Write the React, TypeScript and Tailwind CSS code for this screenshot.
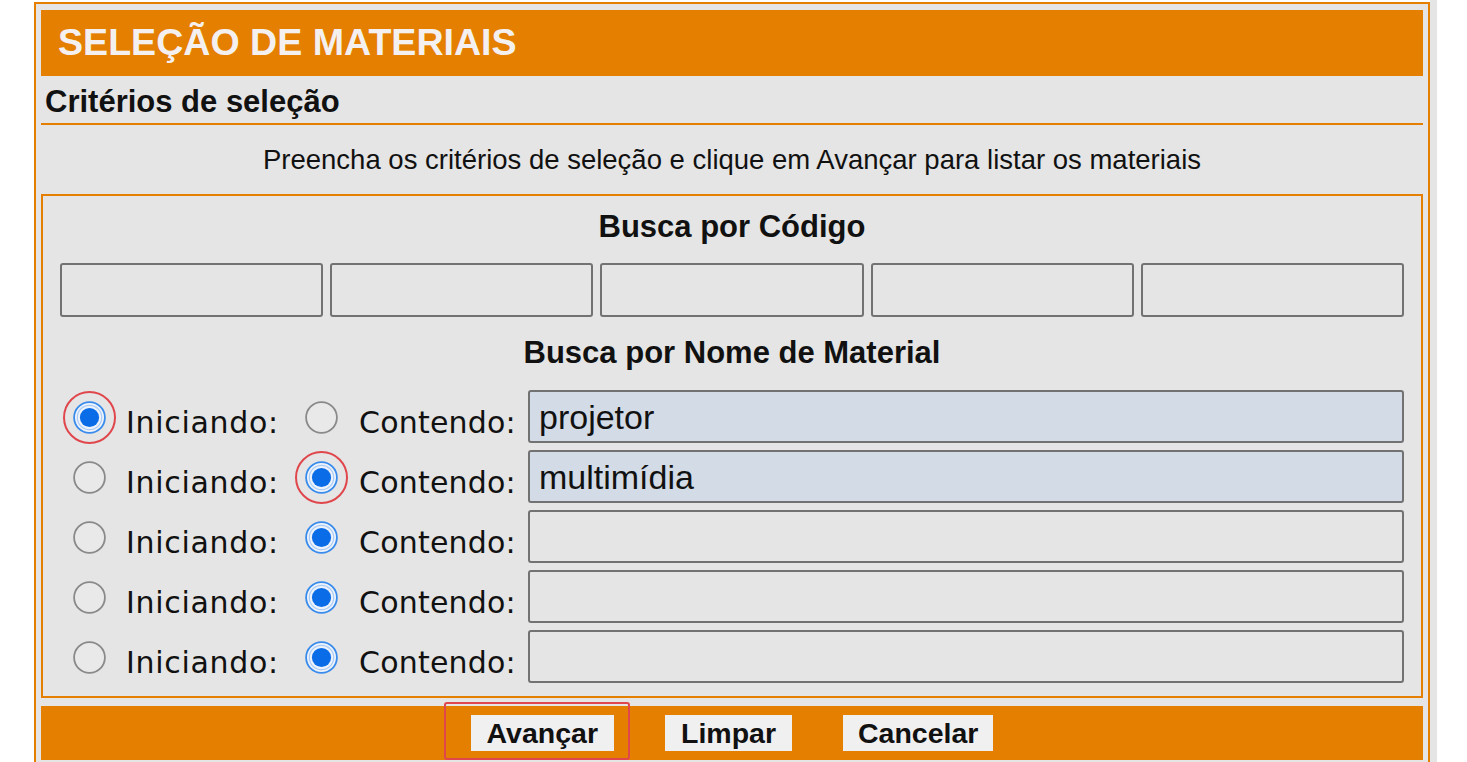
import React from "react";

const ORANGE = "bg-[#e57f00]";

function Radio({ checked }: { checked: boolean }) {
  return (
    <svg width="33" height="33" viewBox="0 0 33 33" className="block">
      {checked ? (
        <>
          <circle cx="16.5" cy="16.5" r="15.4" fill="#eef3fb" stroke="#3a8cec" strokeWidth="1.8" />
          <circle cx="16.5" cy="16.5" r="12.2" fill="none" stroke="#a9cbf4" strokeWidth="1.2" />
          <circle cx="16.5" cy="16.5" r="9.6" fill="#0a6ce6" />
        </>
      ) : (
        <circle cx="16.5" cy="16.5" r="15.4" fill="#e9e9e9" stroke="#8a8a8a" strokeWidth="1.8" />
      )}
    </svg>
  );
}

function Highlight() {
  return <div className="pointer-events-none absolute -inset-[10px] rounded-full border-2 border-[#e0474c]" />;
}

type Row = { first: boolean; value: string; hl?: "first" | "second" };

const rows: Row[] = [
  { first: true, value: "projetor", hl: "first" },
  { first: false, value: "multimídia", hl: "second" },
  { first: false, value: "" },
  { first: false, value: "" },
  { first: false, value: "" },
];

export default function App() {
  const sans = { fontFamily: '"Liberation Sans", Arial, sans-serif' };
  const verd = { fontFamily: '"DejaVu Sans", Verdana, sans-serif' };
  return (
    <div className="flex min-h-screen w-full bg-white" style={sans}>
      <div className="ml-[34px] mt-[2px] flex w-[1396px] flex-col border-2 border-b-0 border-[#e57f00] bg-[#e5e5e5] px-[5px] pt-[6px]">
        {/* Header */}
        <div className={`flex h-[66px] items-center pl-[17px] ${ORANGE}`}>
          <span className="text-[37.6px] font-bold leading-none text-[#f4f0f0]">SELEÇÃO DE MATERIAIS</span>
        </div>

        {/* Criteria title */}
        <div className="flex h-[47px] items-center pl-[4px] pt-[3px]">
          <span className="text-[31px] font-bold leading-none text-[#111]">Critérios de seleção</span>
        </div>
        <div className={`h-[2px] ${ORANGE}`} />

        {/* Instructions */}
        <div className="flex h-[69px] items-center justify-center">
          <span className="text-[27.5px] leading-none text-[#111]">
            Preencha os critérios de seleção e clique em Avançar para listar os materiais
          </span>
        </div>

        {/* Inner box */}
        <div className="flex flex-col border-2 border-[#e57f00] px-[17px] pb-[13px]">
          <div className="flex h-[60px] items-center justify-center pt-[1px]">
            <span className="text-[31px] font-bold leading-none text-[#111]">Busca por Código</span>
          </div>
          <div className="mt-[7px] grid grid-cols-5 gap-[7px]">
            {[0, 1, 2, 3, 4].map((i) => (
              <div key={i} className="h-[54px] rounded-[3px] border-2 border-[#727272] bg-[#e5e5e5]" />
            ))}
          </div>

          <div className="mt-[6px] flex h-[58px] items-center justify-center">
            <span className="text-[31px] font-bold leading-none text-[#111]">Busca por Nome de Material</span>
          </div>

          <div className="mt-[9px] flex flex-col gap-[7px]">
            {rows.map((r, i) => (
              <div key={i} className="flex h-[53px] items-center">
                <div className="flex w-[66px] items-center pl-[13px] pt-[2px]">
                  <div className="relative">
                    <Radio checked={r.first} />
                    {r.hl === "first" && <Highlight />}
                  </div>
                </div>
                <div
                  className="w-[179px] pt-[13px] text-[30px] leading-none tracking-[0.7px] text-[#111]"
                  style={verd}
                >
                  Iniciando:
                </div>
                <div className="flex w-[54px] items-center pt-[2px]">
                  <div className="relative">
                    <Radio checked={!r.first} />
                    {r.hl === "second" && <Highlight />}
                  </div>
                </div>
                <div
                  className="w-[169px] pt-[13px] text-[30px] leading-none tracking-[0.2px] text-[#111]"
                  style={verd}
                >
                  Contendo:
                </div>
                <div
                  className={`flex h-[53px] flex-1 items-center rounded-[3px] border-2 border-[#727272] pl-[9px] ${
                    r.value ? "bg-[#d3dbe6]" : "bg-[#e5e5e5]"
                  }`}
                >
                  <span className="text-[34px] leading-none text-[#111]">{r.value}</span>
                </div>
              </div>
            ))}
          </div>
        </div>

        {/* Button bar */}
        <div className={`mt-[8px] flex h-[54px] items-center justify-center gap-[51px] ${ORANGE}`}>
          <div className="relative">
            <button className="h-[36px] bg-[#f0f0f0] px-[16px] text-[28.5px] font-bold leading-none text-[#111]">
              Avançar
            </button>
            <div className="pointer-events-none absolute -bottom-[9px] -left-[27px] -right-[16px] -top-[13px] rounded-[3px] border-2 border-[#e0474c]" />
          </div>
          <button className="h-[36px] bg-[#f0f0f0] px-[16px] text-[28.5px] font-bold leading-none text-[#111]">
            Limpar
          </button>
          <button className="h-[36px] bg-[#f0f0f0] px-[15px] text-[28.5px] font-bold leading-none text-[#111]">
            Cancelar
          </button>
        </div>
        <div className="h-[20px]" />
      </div>
      <div className="w-[7px] bg-[#e5e5e5]" />
    </div>
  );
}
